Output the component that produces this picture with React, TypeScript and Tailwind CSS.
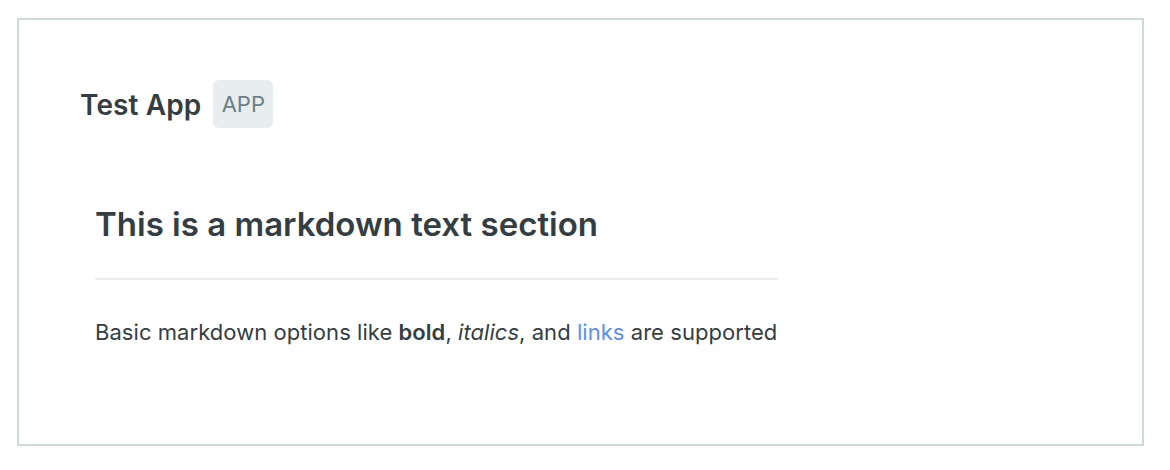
import React from "react";

export default function App() {
  return (
    <div className="w-[1170px] h-[470px] bg-white pt-[18px] pl-[17px]" style={{ fontFamily: "Inter, 'Open Sans', sans-serif" }}>
      <div className="w-[1127px] h-[428px] border-2 border-[#ced9da] bg-white pl-[61px] pt-[60px]">
        <div className="flex items-center gap-[12px] h-[48px]">
          <span className="text-[28px] font-semibold text-[#343e42] leading-none pt-[2px] tracking-[0.1px]">Test App</span>
          <span className="h-[48px] w-[60px] rounded-[6px] bg-[#e8eef0] text-[#6a7f86] text-[22px] flex items-center justify-center leading-none">APP</span>
        </div>
        <div className="pl-[15px] w-[698px] mt-[76px]">
          <h1 className="text-[33px] font-semibold text-[#343e42] leading-[40px]">This is a markdown text section</h1>
          <div className="mt-[34px] h-[2px] bg-[#e8edef]"></div>
          <p className="mt-[38px] text-[22px] text-[#343e42] leading-[28px] tracking-[0.05px] whitespace-nowrap">
            Basic markdown options like <b className="font-semibold">bold</b>, <i>italics</i>, and{" "}
            <a className="text-[#5a8ff0]">links</a> are supported
          </p>
        </div>
      </div>
    </div>
  );
}
